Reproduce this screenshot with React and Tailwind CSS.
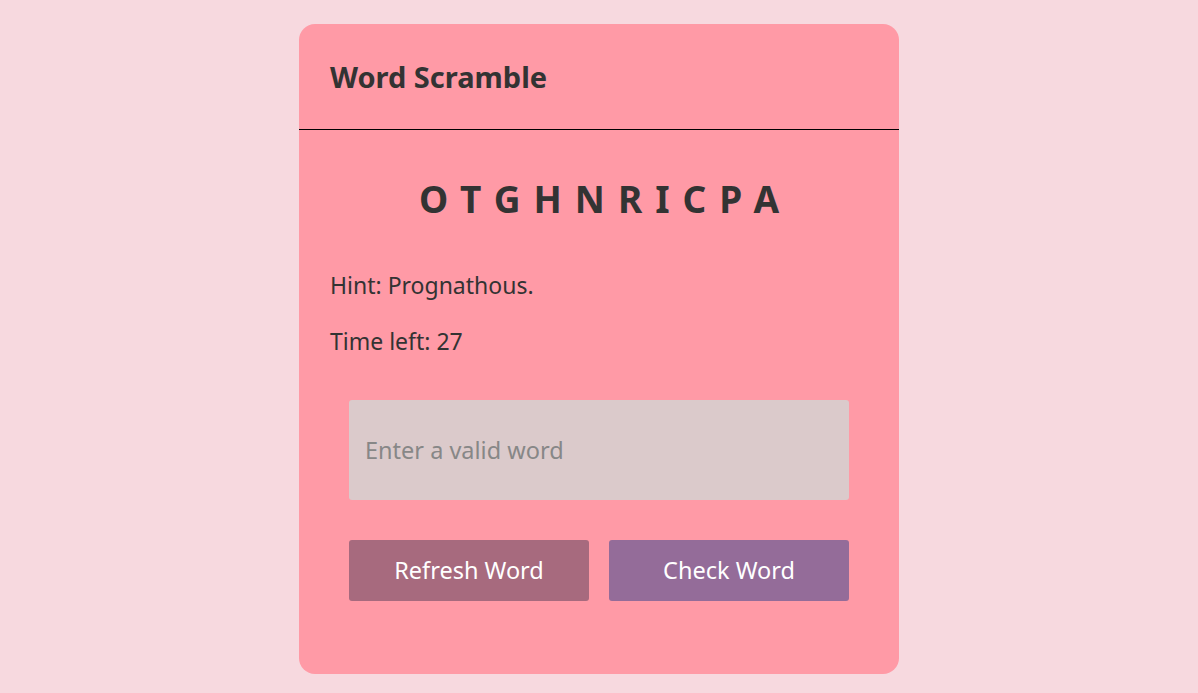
export default function App() {
  return (
    <div
      className="min-h-screen w-full bg-[#f7d9df] flex justify-center pt-[24px] text-[#333333]"
      style={{ fontFamily: '"Noto Sans", "Open Sans", sans-serif' }}
    >
      <div className="w-[600px] h-[650px] rounded-[16px] bg-[#ff9aa6] flex flex-col">
        <div className="h-[106px] border-b border-black px-[31px] flex items-center">
          <h2 className="text-[29px] font-bold">Word Scramble</h2>
        </div>

        <div className="px-[31px] flex flex-col">
          <div className="mt-[43px] h-[50px] flex items-center justify-center text-[37px] font-bold tracking-[13px] mr-[-13px] uppercase leading-none">
            otghnricpa
          </div>

          <div className="mt-[44px] flex flex-col text-[23px]">
            <p className="h-[36px] flex items-center">Hint: Prognathous.</p>
            <p className="mt-[20px] h-[36px] flex items-center">Time left: 27</p>
          </div>

          <div className="px-[19px] mt-[41px]">
            <input
              type="text"
              placeholder="Enter a valid word"
              className="w-full h-[100px] rounded-[3px] bg-[#dbcacb] px-[16px] text-[23.5px] outline-none placeholder:text-[#878787]"
            />

            <div className="mt-[40px] flex gap-[20px]">
              <button className="flex-1 h-[61px] rounded-[3px] bg-[#a76a7e] text-white text-[23.5px]">
                Refresh Word
              </button>
              <button className="flex-1 h-[61px] rounded-[3px] bg-[#946c99] text-white text-[23.5px]">
                Check Word
              </button>
            </div>
          </div>
        </div>
      </div>
    </div>
  );
}
